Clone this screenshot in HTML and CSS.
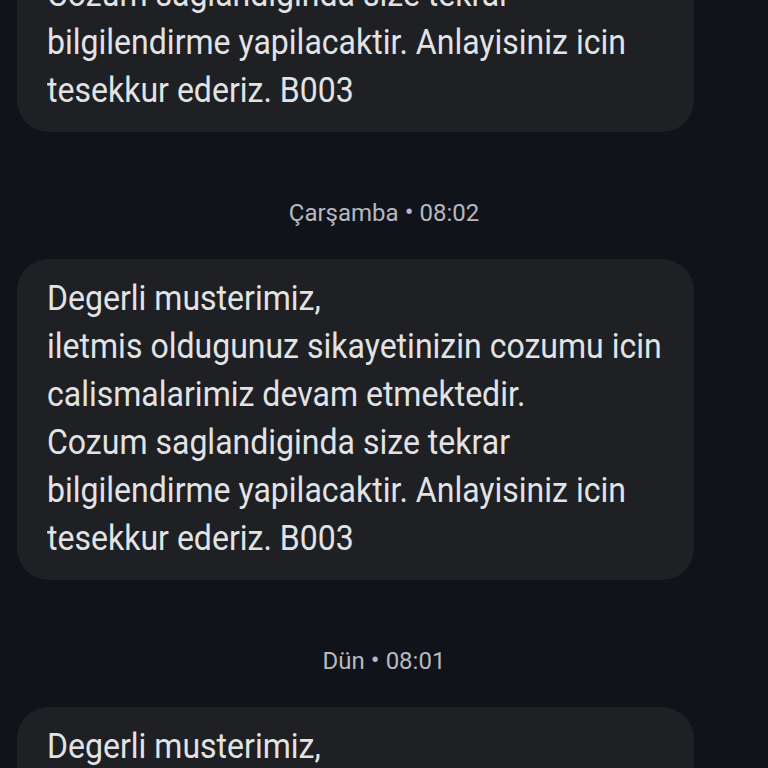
FILE: index.html
```html
<!DOCTYPE html>
<html lang="tr">
<head>
    <meta charset="UTF-8">
    <meta name="viewport" content="width=device-width, initial-scale=1.0">
    <title>Mesajlar</title>
    <link rel="stylesheet" href="styles.css">
</head>
<body>
    <div class="thread">
        <div class="bubble first">
            <div class="text">
                Degerli musterimiz,<br>
                iletmis oldugunuz sikayetinizin cozumu icin calismalarimiz devam etmektedir.<br>
                Cozum saglandiginda size tekrar bilgilendirme yapilacaktir. Anlayisiniz icin tesekkur ederiz. B003
            </div>
        </div>
        <div class="stamp">Çarşamba<span class="dot">•</span>08:02</div>
        <div class="bubble">
            <div class="text">
                Degerli musterimiz,<br>
                iletmis oldugunuz sikayetinizin cozumu icin calismalarimiz devam etmektedir.<br>
                Cozum saglandiginda size tekrar bilgilendirme yapilacaktir. Anlayisiniz icin tesekkur ederiz. B003
            </div>
        </div>
        <div class="stamp">Dün<span class="dot">•</span>08:01</div>
        <div class="bubble">
            <div class="text">
                Degerli musterimiz,<br>
                iletmis oldugunuz sikayetinizin cozumu icin calismalarimiz devam etmektedir.<br>
                Cozum saglandiginda size tekrar bilgilendirme yapilacaktir. Anlayisiniz icin tesekkur ederiz. B003
            </div>
        </div>
    </div>
</body>
</html>
```

FILE: styles.css
```css
html, body {
    margin: 0;
    height: 100%;
    overflow: hidden;
}
body {
    background-color: #10131a;
    font-family: Roboto, "Noto Sans", sans-serif;
}
.thread {
    display: flex;
    flex-direction: column;
}
.bubble {
    width: 677px;
    margin-left: 17px;
    box-sizing: border-box;
    background-color: #1e2024;
    border-radius: 32px;
    padding: 16px 30px 17px 30px;
    color: #e2e3e5;
}
/* message font is a narrow one, squeeze Roboto to match */
.bubble .text {
    width: 674px;
    font-size: 35px;
    line-height: 48px;
    transform: scaleX(0.915);
    transform-origin: left top;
}
.first {
    margin-top: -189px;
}
.stamp {
    text-align: center;
    color: #b6b9c0;
    font-size: 24px;
    line-height: 30px;
    margin: 65px 0 31px 0;
}
.stamp .dot {
    margin: 0 6px;
    font-size: 26px;
}
```
